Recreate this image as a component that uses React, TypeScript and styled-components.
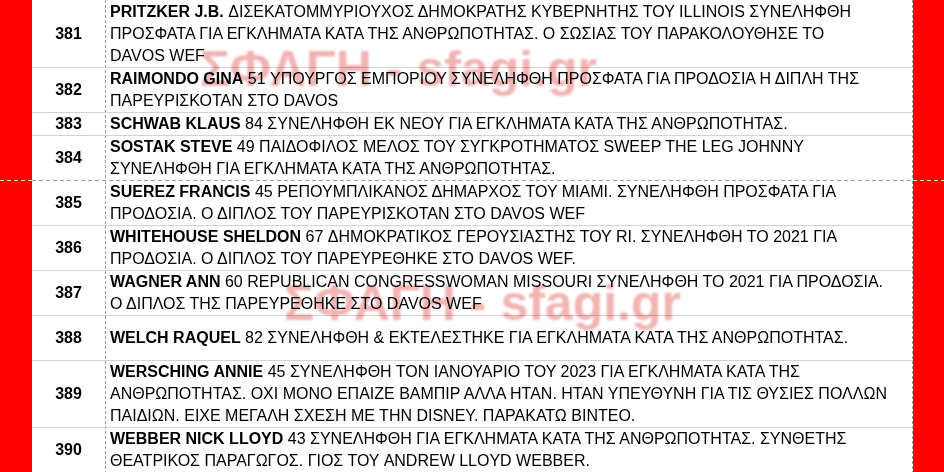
import React from "react";
import styled, { createGlobalStyle } from "styled-components";

const Global = createGlobalStyle`
  html, body { margin: 0; padding: 0; background: #ffffff; }
  body { width: 944px; height: 472px; overflow: hidden; font-family: "Liberation Sans", Arial, sans-serif; }
`;

const Page = styled.div`
  position: relative;
  width: 944px;
  height: 472px;
  overflow: hidden;
  display: flex;
  flex-direction: column;
  background: #ffffff;
  isolation: isolate;
`;

const Sheet = styled.section`
  display: flex;
  flex: 0 0 auto;
`;

const Side = styled.div<{ $w: number }>`
  flex: 0 0 ${(p) => p.$w}px;
  background: #ff0000;
`;

const Table = styled.div<{ $top?: number }>`
  flex: 1 1 auto;
  display: flex;
  flex-direction: column;
  padding-top: ${(p) => p.$top ?? 0}px;
  background-color: #ffffff;
  background-image:
    repeating-linear-gradient(to bottom, #9c9c9c 0 3px, transparent 3px 5px),
    repeating-linear-gradient(to bottom, #9c9c9c 0 3px, transparent 3px 5px);
  background-size: 1px 100%, 1px 100%;
  background-position: 73px 0, right 0 top 0;
  background-repeat: no-repeat;
`;

const Row = styled.div<{ $border: boolean; $min: number }>`
  display: flex;
  min-height: ${(p) => p.$min}px;
  border-bottom: ${(p) => (p.$border ? "1px solid #d3d3d3" : "none")};
`;

const NumCell = styled.div`
  flex: 0 0 73px;
  display: flex;
  align-items: center;
  justify-content: center;
  font-weight: 700;
  font-size: 16px;
  line-height: 22px;
  color: #000;
`;

const TextCell = styled.div`
  flex: 1 1 auto;
  display: flex;
  flex-direction: column;
  justify-content: center;
  padding-left: 5px;
  font-size: 16px;
  line-height: 22px;
  color: #000;
`;

const Line = styled.span`
  display: block;
  white-space: nowrap;
`;

const Name = styled.b`
  font-weight: 700;
`;

const PageBreak = styled.div`
  display: flex;
  height: 1px;
  flex: 0 0 1px;
`;

const BreakPart = styled.div<{ $w?: number; $onRed?: boolean }>`
  flex: ${(p) => (p.$w ? `0 0 ${p.$w}px` : "1 1 auto")};
  background-color: ${(p) => (p.$onRed ? "#ff0000" : "#ffffff")};
  background-image: repeating-linear-gradient(
    to right,
    ${(p) => (p.$onRed ? "#e6e6e6" : "#9c9c9c")} 0 4px,
    transparent 4px 7px
  );
`;

const Watermark = styled.div<{ $x: number; $y: number }>`
  position: absolute;
  left: ${(p) => p.$x}px;
  top: ${(p) => p.$y}px;
  font-family: "Liberation Sans", Arial, sans-serif;
  font-weight: 700;
  font-size: 50px;
  line-height: 50px;
  white-space: nowrap;
  color: rgba(215, 20, 20, 0.32);
  filter: blur(0.8px);
  mix-blend-mode: multiply;
  pointer-events: none;
`;

type Entry = { no: number; name: string; lines: string[]; min?: number };

const first: Entry[] = [
  {
    no: 381,
    name: "PRITZKER J.B.",
    lines: [
      " ΔΙΣΕΚΑΤΟΜΜΥΡΙΟΥΧΟΣ ΔΗΜΟΚΡΑΤΗΣ ΚΥΒΕΡΝΗΤΗΣ ΤΟΥ ILLINOIS ΣΥΝΕΛΗΦΘΗ",
      "ΠΡΟΣΦΑΤΑ ΓΙΑ ΕΓΚΛΗΜΑΤΑ ΚΑΤΑ ΤΗΣ ΑΝΘΡΩΠΟΤΗΤΑΣ. Ο ΣΩΣΙΑΣ ΤΟΥ ΠΑΡΑΚΟΛΟΥΘΗΣΕ ΤΟ",
      "DAVOS WEF",
    ],
  },
  {
    no: 382,
    name: "RAIMONDO GINA",
    lines: [
      " 51 ΥΠΟΥΡΓΟΣ ΕΜΠΟΡΙΟΥ ΣΥΝΕΛΗΦΘΗ ΠΡΟΣΦΑΤΑ ΓΙΑ ΠΡΟΔΟΣΙΑ Η ΔΙΠΛΗ ΤΗΣ",
      "ΠΑΡΕΥΡΙΣΚΟΤΑΝ ΣΤΟ DAVOS",
    ],
  },
  {
    no: 383,
    name: "SCHWAB KLAUS",
    lines: [" 84 ΣΥΝΕΛΗΦΘΗ ΕΚ ΝΕΟΥ ΓΙΑ ΕΓΚΛΗΜΑΤΑ ΚΑΤΑ ΤΗΣ ΑΝΘΡΩΠΟΤΗΤΑΣ."],
  },
  {
    no: 384,
    name: "SOSTAK STEVE",
    lines: [
      " 49 ΠΑΙΔΟΦΙΛΟΣ ΜΕΛΟΣ ΤΟΥ ΣΥΓΚΡΟΤΗΜΑΤΟΣ SWEEP THE LEG JOHNNY",
      "ΣΥΝΕΛΗΦΘΗ ΓΙΑ ΕΓΚΛΗΜΑΤΑ ΚΑΤΑ ΤΗΣ ΑΝΘΡΩΠΟΤΗΤΑΣ.",
    ],
  },
];

const second: Entry[] = [
  {
    no: 385,
    name: "SUEREZ FRANCIS",
    lines: [
      " 45 ΡΕΠΟΥΜΠΛΙΚΑΝΟΣ ΔΗΜΑΡΧΟΣ ΤΟΥ ΜΙΑΜΙ. ΣΥΝΕΛΗΦΘΗ ΠΡΟΣΦΑΤΑ ΓΙΑ",
      "ΠΡΟΔΟΣΙΑ. Ο ΔΙΠΛΟΣ ΤΟΥ ΠΑΡΕΥΡΙΣΚΟΤΑΝ ΣΤΟ DAVOS WEF",
    ],
  },
  {
    no: 386,
    name: "WHITEHOUSE SHELDON",
    lines: [
      " 67 ΔΗΜΟΚΡΑΤΙΚΟΣ ΓΕΡΟΥΣΙΑΣΤΗΣ ΤΟΥ RI. ΣΥΝΕΛΗΦΘΗ ΤΟ 2021 ΓΙΑ",
      "ΠΡΟΔΟΣΙΑ. Ο ΔΙΠΛΟΣ ΤΟΥ ΠΑΡΕΥΡΕΘΗΚΕ ΣΤΟ DAVOS WEF.",
    ],
  },
  {
    no: 387,
    name: "WAGNER ANN",
    lines: [
      " 60 REPUBLICAN CONGRESSWOMAN MISSOURI ΣΥΝΕΛΗΦΘΗ ΤΟ 2021 ΓΙΑ ΠΡΟΔΟΣΙΑ.",
      "Ο ΔΙΠΛΟΣ ΤΗΣ ΠΑΡΕΥΡΕΘΗΚΕ ΣΤΟ DAVOS WEF",
    ],
  },
  {
    no: 388,
    name: "WELCH RAQUEL",
    lines: [" 82 ΣΥΝΕΛΗΦΘΗ & ΕΚΤΕΛΕΣΤΗΚΕ ΓΙΑ ΕΓΚΛΗΜΑΤΑ ΚΑΤΑ ΤΗΣ ΑΝΘΡΩΠΟΤΗΤΑΣ."],
    min: 44,
  },
  {
    no: 389,
    name: "WERSCHING ANNIE",
    lines: [
      " 45 ΣΥΝΕΛΗΦΘΗ ΤΟΝ ΙΑΝΟΥΑΡΙΟ ΤΟΥ 2023 ΓΙΑ ΕΓΚΛΗΜΑΤΑ ΚΑΤΑ ΤΗΣ",
      "ΑΝΘΡΩΠΟΤΗΤΑΣ. ΟΧΙ ΜΟΝΟ ΕΠΑΙΖΕ ΒΑΜΠΙΡ ΑΛΛΑ ΗΤΑΝ. ΗΤΑΝ ΥΠΕΥΘΥΝΗ ΓΙΑ ΤΙΣ ΘΥΣΙΕΣ ΠΟΛΛΩΝ",
      "ΠΑΙΔΙΩΝ. ΕΙΧΕ ΜΕΓΑΛΗ ΣΧΕΣΗ ΜΕ ΤΗΝ DISNEY. ΠΑΡΑΚΑΤΩ ΒΙΝΤΕΟ.",
    ],
  },
  {
    no: 390,
    name: "WEBBER NICK LLOYD",
    lines: [
      " 43 ΣΥΝΕΛΗΦΘΗ ΓΙΑ ΕΓΚΛΗΜΑΤΑ ΚΑΤΑ ΤΗΣ ΑΝΘΡΩΠΟΤΗΤΑΣ. ΣΥΝΘΕΤΗΣ",
      "ΘΕΑΤΡΙΚΟΣ ΠΑΡΑΓΩΓΟΣ. ΓΙΟΣ ΤΟΥ ANDREW LLOYD WEBBER.",
    ],
  },
];

function Rows({ items, lastBorder }: { items: Entry[]; lastBorder: boolean }) {
  return (
    <>
      {items.map((e, i) => (
        <Row key={e.no} $border={lastBorder || i < items.length - 1} $min={e.min ?? 0}>
          <NumCell>{e.no}</NumCell>
          <TextCell>
            {e.lines.map((l, j) => (
              <Line key={j}>
                {j === 0 && <Name>{e.name}</Name>}
                {l}
              </Line>
            ))}
          </TextCell>
        </Row>
      ))}
    </>
  );
}

export default function App() {
  return (
    <>
      <Global />
      <Page>
        <Sheet>
          <Side $w={32} />
          <Table $top={1}>
            <Rows items={first} lastBorder={false} />
          </Table>
          <Side $w={31} />
        </Sheet>
        <PageBreak>
          <BreakPart $w={32} $onRed />
          <BreakPart />
          <BreakPart $w={31} $onRed />
        </PageBreak>
        <Sheet>
          <Side $w={32} />
          <Table>
            <Rows items={second} lastBorder />
          </Table>
          <Side $w={31} />
        </Sheet>
        <Watermark $x={200} $y={44}>ΣΦΑΓΗ - sfagi.gr</Watermark>
        <Watermark $x={284} $y={278}>ΣΦΑΓΗ - sfagi.gr</Watermark>
      </Page>
    </>
  );
}
